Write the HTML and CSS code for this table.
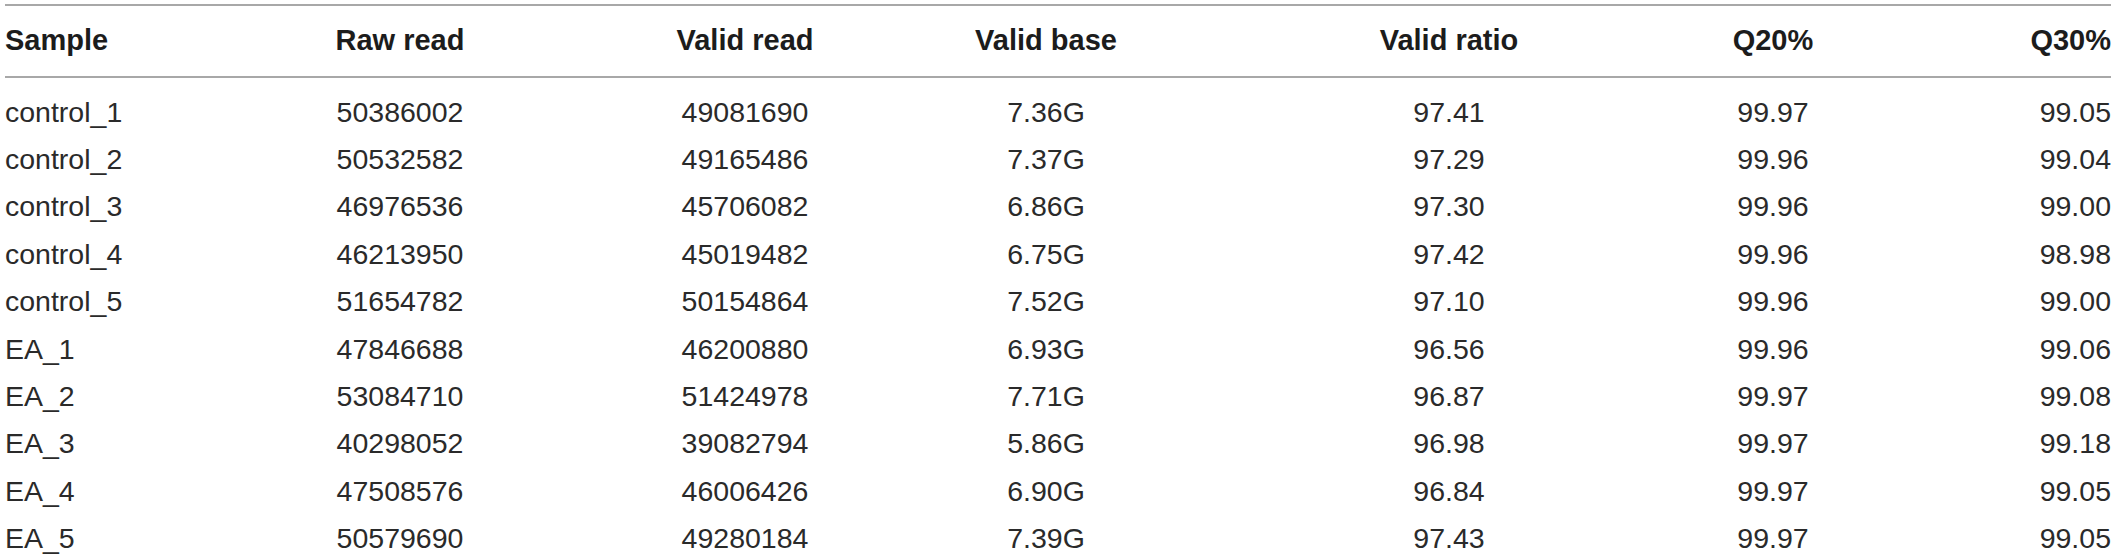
FILE: index.html
```html
<!DOCTYPE html>
<html>
<head>
<meta charset="utf-8">
<link rel="stylesheet" href="styles.css">
</head>
<body>
<div class="table">
  <div class="row head">
    <div class="c first">Sample</div>
    <div class="c">Raw read</div>
    <div class="c">Valid read</div>
    <div class="c">Valid base</div>
    <div class="c">Valid ratio</div>
    <div class="c">Q20%</div>
    <div class="c last">Q30%</div>
  </div>
  <div class="body">
    <div class="row"><div class="c first">control_1</div><div class="c">50386002</div><div class="c">49081690</div><div class="c">7.36G</div><div class="c">97.41</div><div class="c">99.97</div><div class="c last">99.05</div></div>
    <div class="row"><div class="c first">control_2</div><div class="c">50532582</div><div class="c">49165486</div><div class="c">7.37G</div><div class="c">97.29</div><div class="c">99.96</div><div class="c last">99.04</div></div>
    <div class="row"><div class="c first">control_3</div><div class="c">46976536</div><div class="c">45706082</div><div class="c">6.86G</div><div class="c">97.30</div><div class="c">99.96</div><div class="c last">99.00</div></div>
    <div class="row"><div class="c first">control_4</div><div class="c">46213950</div><div class="c">45019482</div><div class="c">6.75G</div><div class="c">97.42</div><div class="c">99.96</div><div class="c last">98.98</div></div>
    <div class="row"><div class="c first">control_5</div><div class="c">51654782</div><div class="c">50154864</div><div class="c">7.52G</div><div class="c">97.10</div><div class="c">99.96</div><div class="c last">99.00</div></div>
    <div class="row"><div class="c first">EA_1</div><div class="c">47846688</div><div class="c">46200880</div><div class="c">6.93G</div><div class="c">96.56</div><div class="c">99.96</div><div class="c last">99.06</div></div>
    <div class="row"><div class="c first">EA_2</div><div class="c">53084710</div><div class="c">51424978</div><div class="c">7.71G</div><div class="c">96.87</div><div class="c">99.97</div><div class="c last">99.08</div></div>
    <div class="row"><div class="c first">EA_3</div><div class="c">40298052</div><div class="c">39082794</div><div class="c">5.86G</div><div class="c">96.98</div><div class="c">99.97</div><div class="c last">99.18</div></div>
    <div class="row"><div class="c first">EA_4</div><div class="c">47508576</div><div class="c">46006426</div><div class="c">6.90G</div><div class="c">96.84</div><div class="c">99.97</div><div class="c last">99.05</div></div>
    <div class="row"><div class="c first">EA_5</div><div class="c">50579690</div><div class="c">49280184</div><div class="c">7.39G</div><div class="c">97.43</div><div class="c">99.97</div><div class="c last">99.05</div></div>
  </div>
</div>
</body>
</html>
```
FILE: styles.css
```css
html, body {
  margin: 0;
  padding: 0;
  background: #ffffff;
}
body {
  font-family: "Liberation Sans", Arial, sans-serif;
  color: #222222;
}
.table {
  margin: 4px 0 0 5px;
  width: 2106px;
}
.row {
  display: grid;
  grid-template-columns: 175px 440px 250px 352px 454px 194px 241px;
  white-space: nowrap;
}
.c {
  text-align: center;
}
.c.first {
  text-align: left;
}
.c.last {
  text-align: right;
}
.head {
  border-top: 2px solid #a8a8a8;
  border-bottom: 2px solid #a8a8a8;
  padding: 17.7px 0 20.3px;
  font-weight: bold;
  font-size: 29px;
  line-height: 32px;
  color: #1c1c1c;
}
.body {
  padding-top: 10.6px;
  font-size: 28.5px;
  line-height: 47.4px;
  color: #2a2a2a;
}
```
